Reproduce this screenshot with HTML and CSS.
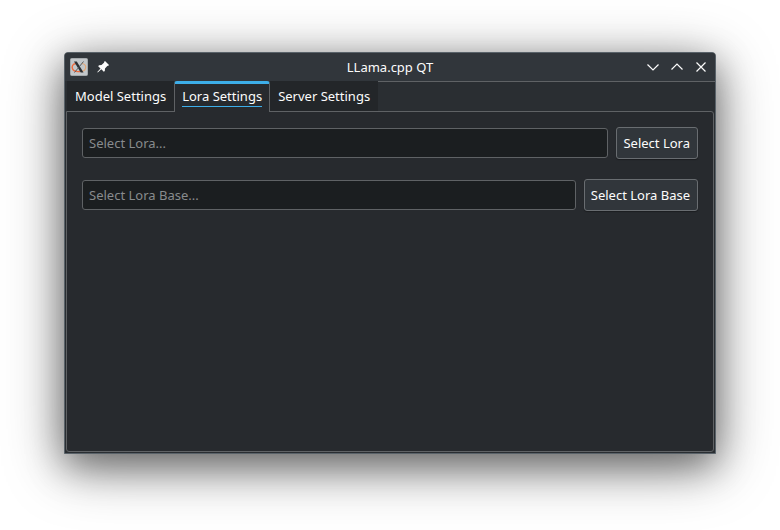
FILE: index.html
```
<!DOCTYPE html>
<html lang="en">

<head>
    <meta charset="UTF-8">
    <meta name="viewport" content="width=device-width, initial-scale=1.0">
    <title>LLama.cpp QT</title>
    <link rel="stylesheet" href="styles.css">
</head>

<body>
    <div class="window">
        <header class="titlebar">
            <div class="titlebar-side">
                <svg class="app-icon" width="18" height="18" viewBox="0 0 18 18">
                    <rect x="0.5" y="0.5" width="17" height="17" rx="1" fill="#c3c7ca" stroke="#a4a9ac" />
                    <path d="M6 5.500C2.500 6 1.500 8.500 2.500 10.800S6 14 10 13.500" fill="none" stroke="#ef6a3c" stroke-width="1.400" />
                    <path d="M12 5.500C15 6 16.300 8 15.500 10.500S12.500 13.500 10 13.500" fill="none" stroke="#e3a777" stroke-width="1.200" />
                    <path d="M4 3.500H6.800L13.500 14.500H10.700Z" fill="#2b2f33" />
                    <path d="M13.500 3.500L4.500 14.500" stroke="#4b4f53" stroke-width="0.900" />
                </svg>
                <button class="title-btn" aria-label="Pin window">
                    <svg width="12" height="12" viewBox="0 0 12 12">
                        <path d="M8 0L12 4L11 5L10.500 4.800L8 7.500L7.800 10L6.800 10.800L4.300 8.300L0.800 11.500L0.300 11L3.500 7.500L1.200 5.200L2 4.200L4.500 4L7.200 1.500L7 1Z" fill="#fcfcfc" />
                    </svg>
                </button>
            </div>
            <h1 class="title">LLama.cpp QT</h1>
            <div class="titlebar-side titlebar-controls">
                <button class="title-btn" aria-label="Minimize">
                    <svg width="12" height="12" viewBox="0 0 12 12"><path d="M0.500 3.500L6 9L11.500 3.500" /></svg>
                </button>
                <button class="title-btn" aria-label="Maximize">
                    <svg width="12" height="12" viewBox="0 0 12 12"><path d="M0.500 8.500L6 3L11.500 8.500" /></svg>
                </button>
                <button class="title-btn" aria-label="Close">
                    <svg width="12" height="12" viewBox="0 0 12 12"><path d="M1.500 1.500L10.500 10.500M10.500 1.500L1.500 10.500" /></svg>
                </button>
            </div>
        </header>

        <div class="tabbar">
            <div class="tabs" role="tablist">
                <button class="tab" role="tab" aria-selected="false">Model Settings</button>
                <button class="tab active" role="tab" aria-selected="true"><span>Lora Settings</span></button>
                <button class="tab" role="tab" aria-selected="false">Server Settings</button>
            </div>
            <div class="tabbar-rest"></div>
        </div>

        <main class="pane" role="tabpanel">
            <div class="row">
                <input type="text" id="lora" aria-label="Lora" placeholder="Select Lora...">
                <button class="btn">Select Lora</button>
            </div>
            <div class="row">
                <input type="text" id="loraBase" aria-label="Lora base" placeholder="Select Lora Base...">
                <button class="btn">Select Lora Base</button>
            </div>
        </main>
    </div>
</body>

</html>
```

FILE: styles.css
```
* {
    box-sizing: border-box;
}

body {
    display: flex;
    min-height: 100vh;
    margin: 0;
    padding: 52px 64px 76px;
    background: #fff;
    color: #fcfcfc;
    font-family: "Noto Sans", sans-serif;
    font-size: 13px;
    line-height: 18px;
}

button,
input {
    font: inherit;
    color: inherit;
}

.window {
    flex: 1;
    display: flex;
    flex-direction: column;
    min-width: 0;
    background: #2a2e32;
    border: 1px solid #596269;
    border-radius: 4px 4px 0 0;
    box-shadow: 0 12px 60px rgba(0, 0, 0, 0.4), 0 12px 36px rgba(0, 0, 0, 0.4);
}

.titlebar {
    display: flex;
    align-items: center;
    height: 28px;
    padding: 0 5px;
    background: #31363b;
    border-radius: 3px 3px 0 0;
}

.titlebar-side {
    flex: 1;
    display: flex;
    align-items: center;
    gap: 6px;
}

.titlebar-controls {
    justify-content: flex-end;
}

.title {
    margin: 0;
    font-size: 13px;
    font-weight: normal;
}

.title-btn {
    display: flex;
    align-items: center;
    justify-content: center;
    width: 18px;
    height: 18px;
    padding: 0;
    background: none;
    border: none;
}

.title-btn path {
    fill: none;
    stroke: #fcfcfc;
    stroke-width: 1.2;
}

.title-btn path[fill] {
    fill: #fcfcfc;
    stroke: none;
}

/* tabs */
.tabbar {
    display: flex;
    height: 30px;
    padding-left: 2px;
}

.tabs {
    display: flex;
}

.tab {
    padding: 0 8px;
    background: #232629;
    border: none;
}

.tab.active {
    position: relative;
    margin-bottom: -1px;
    padding: 0 7px 3px;
    background: #272a2e;
    border: 1px solid #5f6265;
    border-top: 3px solid #3daee9;
    border-bottom: none;
    border-radius: 3px 3px 0 0;
}

.tab.active span {
    display: block;
    height: 21px;
    line-height: 20px;
    border-bottom: 1px solid #3daee9;
}

.tabbar-rest {
    flex: 1;
    border-top: 1px solid #5f6265;
}

/* tab content */
.pane {
    flex: 1;
    display: flex;
    flex-direction: column;
    gap: 20px;
    margin: 0 1px 1px;
    padding: 15px;
    background: #272a2e;
    border: 1px solid #5f6265;
    border-radius: 0 3px 3px 3px;
}

.row {
    display: flex;
    align-items: center;
    gap: 8px;
}

input[type="text"] {
    flex: 1;
    min-width: 0;
    height: 30px;
    padding: 0 6px;
    background: #1b1e20;
    border: 1px solid #5f6265;
    border-radius: 3px;
}

input::placeholder {
    color: #888b8d;
    opacity: 1;
}

.btn {
    height: 32px;
    padding: 0 7px 0 6px;
    background: #31363b;
    border: 1px solid #696d71;
    border-radius: 3px;
    box-shadow: 0 1px 1px rgba(0, 0, 0, 0.3);
}
```
